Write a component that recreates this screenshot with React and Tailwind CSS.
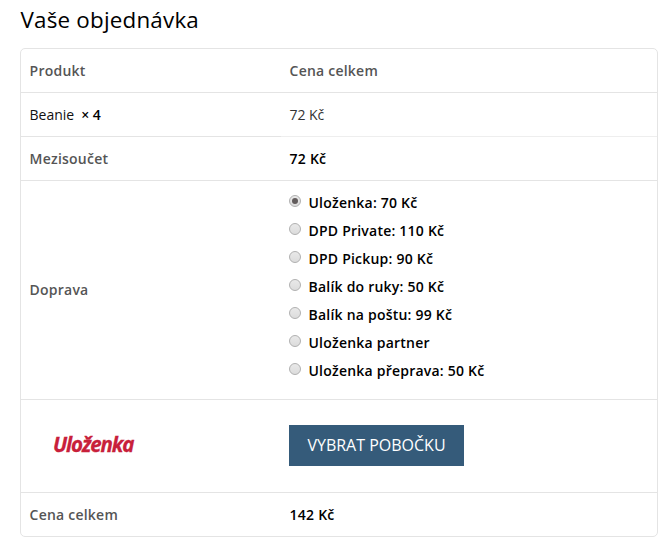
import { useState } from "react";

const shippingMethods = [
  { id: "ulozenka", label: "Uloženka: 70 Kč" },
  { id: "dpd-private", label: "DPD Private: 110 Kč" },
  { id: "dpd-pickup", label: "DPD Pickup: 90 Kč" },
  { id: "do-ruky", label: "Balík do ruky: 50 Kč" },
  { id: "na-postu", label: "Balík na poštu: 99 Kč" },
  { id: "partner", label: "Uloženka partner" },
  { id: "preprava", label: "Uloženka přeprava: 50 Kč" },
];

const Row = ({
  label,
  children,
  className = "h-11",
  labelClassName = "border-b",
  valueClassName = "border-b border-[#e4e4e4] pl-[8.6px]",
}) => (
  <div className={`flex ${className}`}>
    <div
      className={`flex w-[260px] items-center border-[#e4e4e4] pl-[8.6px] font-semibold text-[#555] ${labelClassName}`}
    >
      {label}
    </div>
    <div className={`flex flex-1 items-center font-semibold ${valueClassName}`}>
      {children}
    </div>
  </div>
);

const ShippingOption = ({ method, checked, onChange }) => (
  <label className="flex h-7 items-center">
    <input
      type="radio"
      name="shipping"
      className="mb-[3px] mr-[7.5px] grid h-3 w-3 appearance-none place-items-center rounded-full border border-[#b0b0b0] bg-linear-to-b from-[#e9e9e9] to-[#dcdcdc] before:h-[6px] before:w-[6px] before:rounded-full checked:before:bg-[#625c5c]"
      checked={checked}
      onChange={onChange}
    />
    {method.label}
  </label>
);

const App = () => {
  const [selected, setSelected] = useState("ulozenka");

  return (
    <main className="h-[548px] overflow-hidden bg-white pl-5 pr-[14px] font-['Open_Sans',sans-serif] text-sm tracking-[0.22px] text-black">
      <h1 className="h-12 pl-[0.5px] pt-1 text-[22.4px] leading-8 tracking-[0.2px]">
        Vaše objednávka
      </h1>
      <section className="rounded-[5px] border border-[#e4e4e4]">
        <Row
          label="Produkt"
          valueClassName="border-b border-[#e4e4e4] pl-[8.6px] text-[#555]"
        >
          Cena celkem
        </Row>
        <Row
          label={
            <span className="font-normal tracking-[-0.05px] text-[#111]">
              Beanie&nbsp; <strong className="font-semibold text-black">× 4</strong>
            </span>
          }
          valueClassName="border-b border-[#eee] pl-[8.6px]"
        >
          <span className="font-normal tracking-[-0.1px] text-[#333]">72 Kč</span>
        </Row>
        <Row label="Mezisoučet">72 Kč</Row>
        <Row
          label="Doprava"
          className="h-[219px]"
          valueClassName="border-b border-[#e4e4e4] pl-2"
        >
          <div className="flex flex-col pb-[7px]">
            {shippingMethods.map((method) => (
              <ShippingOption
                key={method.id}
                method={method}
                checked={selected === method.id}
                onChange={() => setSelected(method.id)}
              />
            ))}
          </div>
        </Row>
        <Row
          className="h-[93px]"
          valueClassName="border-b border-[#e4e4e4] pl-2"
          label={
            <svg
              className="ml-[23px] h-8 w-[100px] overflow-visible tracking-normal"
              viewBox="0 0 100 32"
              aria-label="Uloženka"
            >
              <text
                x="0"
                y="22"
                textLength="81.5"
                lengthAdjust="spacing"
                strokeWidth="0.3"
                className="fill-[#c8203a] stroke-[#c8203a] font-['Open_Sans',sans-serif] text-[20.5px] font-bold italic"
              >
                Uloženka
              </text>
            </svg>
          }
        >
          <button
            type="button"
            className="mb-[2px] h-[41px] w-[175px] bg-[#355b7a] text-base font-normal tracking-normal text-white"
          >
            VYBRAT POBOČKU
          </button>
        </Row>
        <Row
          label="Cena celkem"
          className="h-[43px] pt-px"
          labelClassName=""
          valueClassName="pl-[8.6px]"
        >
          142 Kč
        </Row>
      </section>
    </main>
  );
};

export default App;
